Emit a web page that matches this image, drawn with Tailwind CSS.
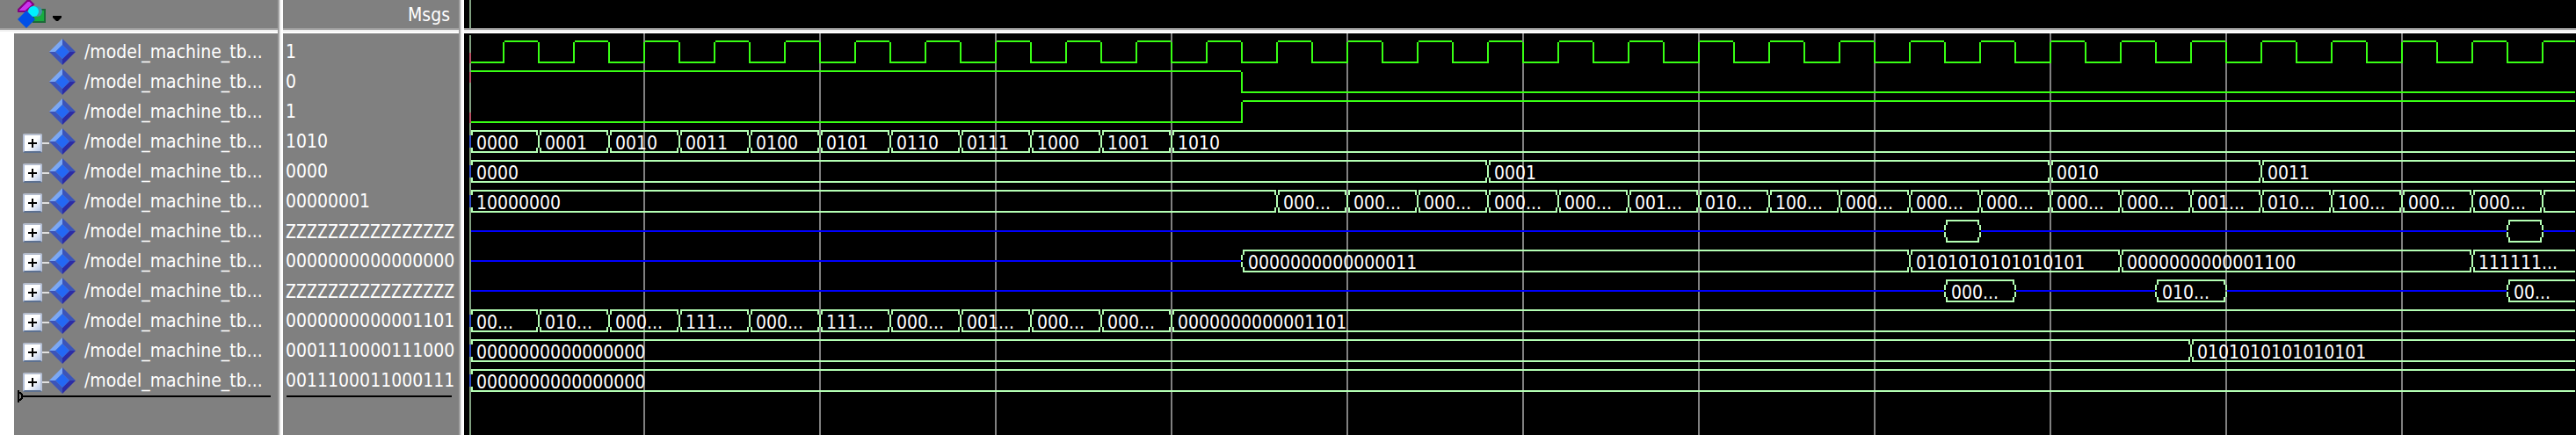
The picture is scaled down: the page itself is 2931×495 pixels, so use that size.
<!DOCTYPE html>
<html lang="en">
<head>
<meta charset="utf-8">
<title>Wave</title>
<script src="https://cdn.jsdelivr.net/npm/@tailwindcss/browser@4"></script>
</head>
<body class="h-screen overflow-hidden bg-[#808080] font-['DejaVu_Sans_Condensed','DejaVu_Sans',sans-serif] text-[21px] leading-[34px] text-white">
<main class="flex h-full">
  <section class="flex w-[322px] shrink-0 flex-col" aria-label="Signals">
    <header class="flex h-8 shrink-0 items-start bg-[#808080] pl-5">
      <button type="button" aria-label="Object filter" class="flex h-8">
        <svg width="52" height="32" viewBox="20 0 52 32" aria-hidden="true">
          <path d="M21 13v-2L31 1h3l4 4-9 8z" fill="#cc33ee" stroke="#800080" stroke-width="2"/>
          <rect x="38" y="11" width="13" height="14" fill="#18ac40" stroke="#1c6a38" stroke-width="2"/>
          <circle cx="42" cy="13" r="6" fill="#4a90a4"/>
          <circle cx="38" cy="13" r="6" fill="#00f0ff"/>
          <path d="M30 12 40 22 30 32 20 22z" fill="#0050e8"/>
          <path d="M60 18h10v2l-4 4h-2l-4-4z" fill="#000"/>
        </svg>
      </button>
    </header>
    <div class="flex h-1.5 shrink-0 flex-col" aria-hidden="true"><i class="h-0.5 bg-[#a0a0a0]"></i><i class="h-0.5 bg-[#f0f0f0]"></i><i class="h-0.5 bg-white"></i></div>
    <div class="flex-1 border-l-16 border-white pt-1">
      <ul id="names"></ul>
      <div class="-mt-[7px] flex h-4 items-center pl-1 pr-[14px]" aria-hidden="true">
        <svg width="6" height="14" viewBox="0 0 6 14" shape-rendering="crispEdges"><path d="M1 0v14M2 3h1l2 2v4l-2 2h-1" fill="none" stroke="#000" stroke-width="2"/></svg>
        <i class="h-0.5 flex-1 bg-black"></i>
      </div>
    </div>
  </section>
  <section class="-ml-1.5 flex w-[212px] shrink-0 border-l-2 border-[#a0a0a0]" aria-label="Values">
    <div class="w-0.5 shrink-0 bg-[#f0f0f0]"></div><div class="w-0.5 shrink-0 bg-white"></div>
    <div class="flex min-w-0 flex-1 flex-col bg-[#808080]">
      <header class="h-8 shrink-0 pr-[10px] text-right">Msgs</header>
      <div class="flex h-1.5 shrink-0 flex-col" aria-hidden="true"><i class="h-0.5 bg-[#a0a0a0]"></i><i class="h-0.5 bg-[#f0f0f0]"></i><i class="h-0.5 bg-white"></i></div>
      <div class="pt-1">
        <ul id="values"></ul>
        <div class="-mt-[7px] flex h-4 items-center pl-1 pr-2" aria-hidden="true"><i class="h-0.5 flex-1 bg-black"></i></div>
      </div>
    </div>
    <div class="w-0.5 shrink-0 bg-[#a0a0a0]"></div><div class="w-0.5 shrink-0 bg-[#f0f0f0]"></div><div class="w-0.5 shrink-0 bg-white"></div>
  </section>
  <section class="flex min-w-0 flex-1 flex-col bg-black" aria-label="Waveforms">
    <div class="flex h-8 shrink-0 pl-1.5"><i class="w-0.5 bg-[#80a080]"></i></div>
    <div class="flex h-1.5 shrink-0 flex-col" aria-hidden="true"><i class="h-0.5 bg-[#a0a0a0]"></i><i class="h-0.5 bg-[#f0f0f0]"></i><i class="h-0.5 bg-white"></i></div>
    <div id="pane" class="min-h-0 flex-1 overflow-hidden">
      <svg id="wave" class="block size-full" shape-rendering="crispEdges"></svg>
    </div>
  </section>
</main>
<script>
const T = 84, P = 80, ROW = 34;
const steps = (from, labels) => labels.split(' ').map((v, i) => [from + i * P, v]);
const zeros = '0000000000000000', alt = '0101010101010101', Z = 'ZZZZZZZZZZZZZZZZ';
const signals = [
  { value: '1', clock: true },
  { value: '0', bit: [[8, 1], [884, 0]] },
  { value: '1', bit: [[8, 0], [884, 1]] },
  { value: '1010', bus: [[8, '0000'], ...steps(T, '0001 0010 0011 0100 0101 0110 0111 1000 1001 1010')] },
  { value: '0000', bus: [[8, '0000'], [1164, '0001'], [1804, '0010'], [2044, '0011']] },
  { value: '00000001', bus: [[8, '10000000'], ...steps(924, '000... 000... 000... 000... 000... 001... 010... 100... 000... 000... 000... 000... 000... 001... 010... 100... 000... 000...'), [2364, '']] },
  { value: Z, bus: [[8, null], [1684, ''], [1724, null], [2324, ''], [2364, null]] },
  { value: zeros, bus: [[8, null], [884, '0000000000000011'], [1644, alt], [1884, '0000000000001100'], [2284, '111111...']] },
  { value: Z, bus: [[8, null], [1684, '000...'], [1764, null], [1924, '010...'], [2004, null], [2324, '00...']] },
  { value: '0000000000001101', bus: [[8, '00...'], ...steps(T, '010... 000... 111... 000... 111... 000... 001... 000... 000... 0000000000001101')] },
  { value: '0001110000111000', bus: [[8, zeros], [1964, alt]] },
  { value: '0011100011000111', bus: [[8, zeros]] },
];

const gem = '<svg class="shrink-0" width="30" height="30" viewBox="0 0 30 30" aria-hidden="true">' +
  '<path d="M15 0 0 15h7l8-8z" fill="#7ca8f4"/><path d="M15 0v7l8 8h7z" fill="#3c54b8"/>' +
  '<path d="M0 15 15 30v-7l-8-8z" fill="#3c54b8"/><path d="M30 15 15 30v-7l8-8z" fill="#2c2ca4"/>' +
  '<path d="M15 7l8 8-8 8-8-8z" fill="#2468f4"/></svg>';
const expander = '<button type="button" aria-label="Expand" class="mt-1 flex size-[22px] shrink-0 items-center justify-center rounded-xs border-2 border-t-[#b4bccc] border-x-[#b4c0d8] border-b-[#5c7090] bg-linear-to-br from-white from-50% to-[#b8c8e8]">' +
  '<svg width="10" height="10" viewBox="0 0 10 10" class="shrink-0" shape-rendering="crispEdges"><path d="M4 0h2v4h4v2H6v4H4V6H0V4h4z" fill="#000"/></svg></button><i class="mt-1 h-0.5 w-2 bg-[#e0e0e0]"></i>';

document.getElementById('names').innerHTML = signals.map(s =>
  '<li class="flex h-[34px] items-center pl-[10px]"><span class="flex w-[30px] shrink-0 items-center">' +
  (s.bus ? expander : '') + '</span>' + gem +
  '<span class="pl-[10px] whitespace-nowrap">/model_machine_tb...</span></li>').join('');
document.getElementById('values').innerHTML = signals.map(s =>
  (s.value === Z ? `<li class="h-[34px] pl-[3px] font-['Noto_Sans',sans-serif]">` : '<li class="h-[34px] pl-[3px]">') + s.value + '</li>').join('');

const pane = document.getElementById('pane'), svg = document.getElementById('wave');
function draw() {
  const END = pane.clientWidth - 1, H = pane.clientHeight;
  let out = '';
  const rect = (x, y, w, h, c) => { if (w > 0) out += `<rect x="${x}" y="${y}" width="${w}" height="${h}" fill="${c}"/>`; };
  for (let x = 204; x < END; x += 200) rect(x, 0, 2, H, '#808080');
  rect(6, 2, 2, H, '#80a080');
  signals.forEach((s, i) => {
    const c = 21 + ROW * i, G = '#38ff14', B = '#b4ffb4';
    let bit = s.bit;
    if (s.clock) {
      bit = [[8, 0]];
      for (let x = 44, v = 1; x < END; x += 40, v = 1 - v) bit.push([x, v]);
    }
    if (bit) {
      bit.forEach(([x, v], k) => {
        const next = k + 1 < bit.length ? bit[k + 1][0] : END;
        const x0 = k && v ? x + 2 : x;
        rect(x0, v ? c - 13 : c + 11, next - x0, 2, G);
        if (k) rect(x, c - 11, 2, 24, G);
      });
      rect(6, bit[0][1] ? c - 11 : c + 1, 2, 12, '#b85064');
      return;
    }
    s.bus.forEach(([x, v], k) => {
      const last = k + 1 === s.bus.length, next = last ? END : s.bus[k + 1][0];
      if (v === null) {
        rect(k ? x + 2 : x, c - 1, next - x - (k ? 2 : 0), 2, '#0000ff');
        if (k) { rect(x, c - 7, 2, 6, B); rect(x, c + 1, 2, 6, B); }
        return;
      }
      const a = k ? x + 2 : x, w = next - a;
      rect(a, c - 13, w, 2, B);
      rect(a, c + 11, w, 2, B);
      rect(a, c - 13, 2, 6, B);
      rect(a, c + 7, 2, 6, B);
      if (!last) { rect(next - 2, c - 13, 2, 6, B); rect(next - 2, c + 7, 2, 6, B); }
      if (!k) rect(6, c - 7, 2, 14, '#3050c8');
      else if (s.bus[k - 1][1] === null) { rect(x, c - 7, 2, 6, B); rect(x, c + 1, 2, 6, B); }
      else rect(x, c - 7, 2, 14, B);
      if (v) out += `<text x="${k ? x + 8 : x + 6}" y="${c + 9}" fill="#fff">${v}</text>`;
    });
  });
  svg.innerHTML = out;
}
draw();
new ResizeObserver(draw).observe(pane);
</script>
</body>
</html>
